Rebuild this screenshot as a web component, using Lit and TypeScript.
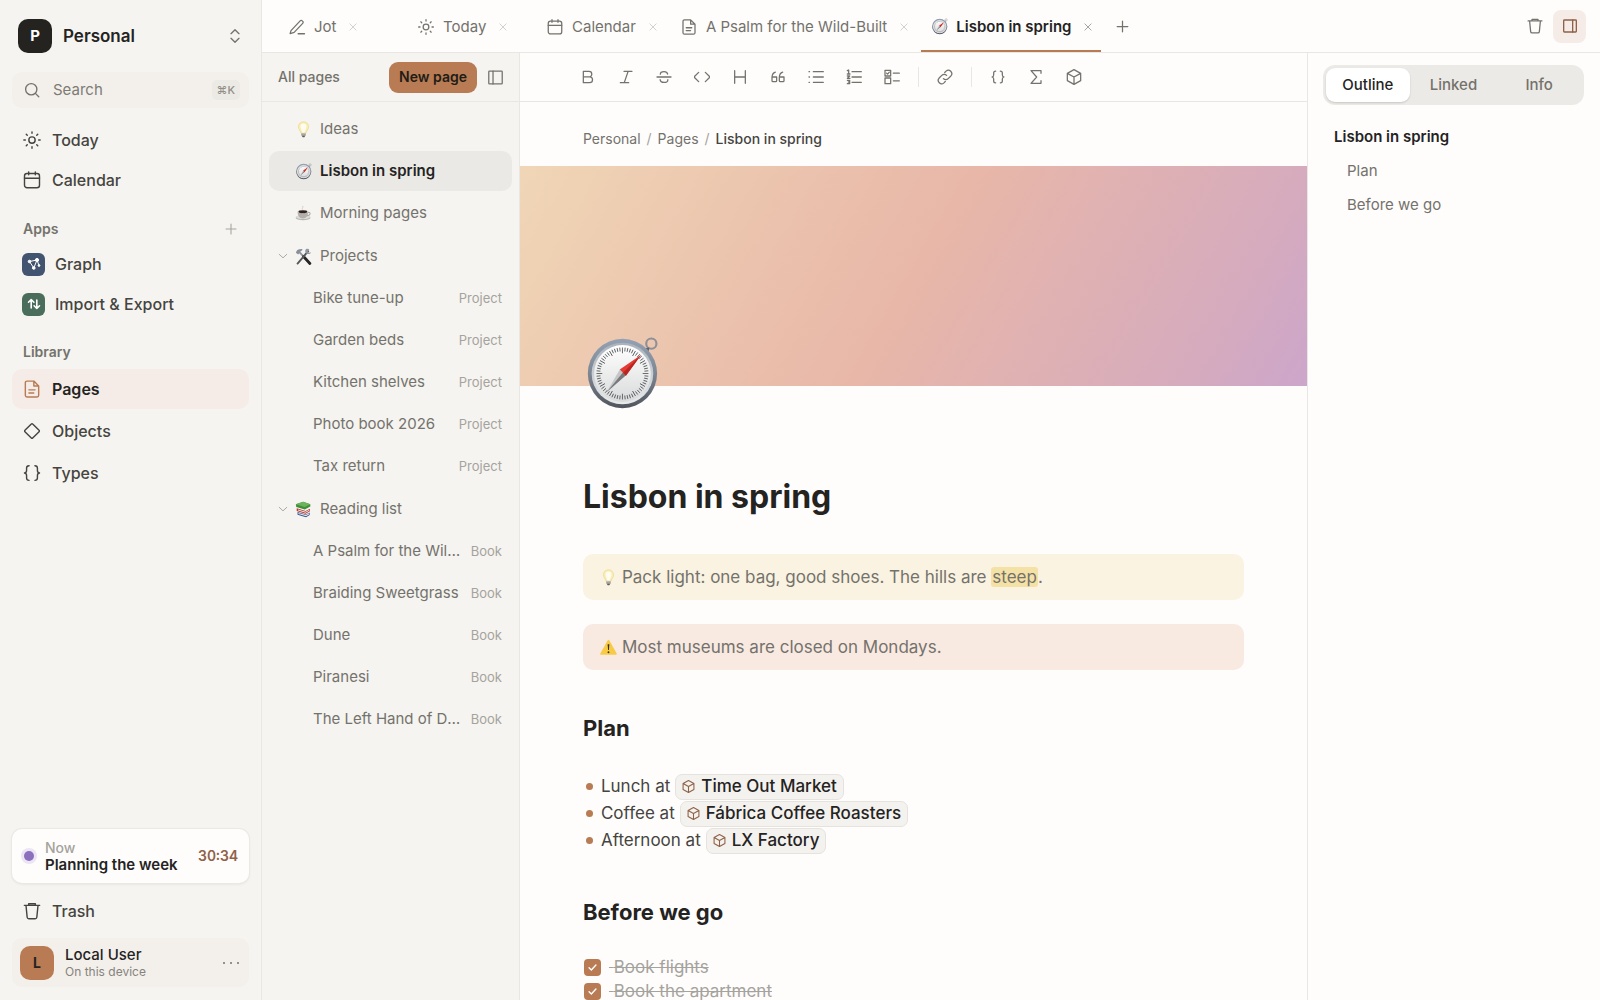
import { LitElement, html, css, svg, nothing, type SVGTemplateResult, type TemplateResult } from "lit";
import { customElement, property, state } from "lit/decorators.js";
import { classMap } from "lit/directives/class-map.js";

/* Line icons, drawn on a 24-unit grid with the current text colour. */
const ICONS: Record<string, SVGTemplateResult> = {
  search: svg`<circle cx="11" cy="11" r="7.5"/><path d="M16.5 16.5 21 21"/>`,
  updown: svg`<path d="M6 8.500l6-6 6 6M6 15.500l6 6 6-6"/>`,
  sun: svg`<circle cx="12" cy="12" r="3.8"/><path d="M12 2.2v1.8M12 20v1.8M2.2 12H4M20 12h1.8M5.1 5.1l1.2 1.2M17.7 17.7l1.2 1.2M5.1 18.9l1.2-1.2M17.7 6.3l1.2-1.2"/>`,
  calendar: svg`<rect x="3" y="4.2" width="18" height="17" rx="3"/><path d="M3 9.8h18M8 2.2v3.6M16 2.2v3.6"/>`,
  doc: svg`<path d="M14.2 2.5H6a2 2 0 0 0-2 2v15a2 2 0 0 0 2 2h12a2 2 0 0 0 2-2V8.300zM14.200 2.500v5.800H20M8.300 13h7.400M8.300 16.700h5.800"/>`,
  diamond: svg`<path d="M11.2 3.500 3.500 11.200a1.100 1.100 0 0 0 0 1.600l7.700 7.700a1.100 1.100 0 0 0 1.600 0l7.700-7.700a1.100 1.100 0 0 0 0-1.600l-7.700-7.700a1.100 1.100 0 0 0-1.600 0z"/>`,
  braces: svg`<path d="M8.500 3.200C5.800 3.200 5.500 4.500 5.500 6v3c0 1.800-.8 2.700-2.500 3 1.700.3 2.500 1.200 2.500 3v3c0 1.500.3 2.800 3 2.800M15.500 3.200c2.700 0 3 1.300 3 2.800v3c0 1.800.8 2.700 2.500 3-1.700.3-2.500 1.200-2.500 3v3c0 1.500-.3 2.800-3 2.800"/>`,
  trash: svg`<path d="M2.800 5.200h18.400M8 5V3.200h8V5M4.800 5.400l1.400 14.100a2 2 0 0 0 2 1.800h7.600a2 2 0 0 0 2-1.800l1.400-14.100"/>`,
  plus: svg`<path d="M12 3.500v17M3.500 12h17"/>`,
  close: svg`<path d="M4.500 4.500l15 15M19.500 4.500l-15 15"/>`,
  chevron: svg`<path d="M3 8l9 8.500L21 8"/>`,
  pen: svg`<path d="M4 16.800 16.200 3.800a2 2 0 0 1 2.900 0l.5.5a2 2 0 0 1 0 2.900L8.200 19.200 2.800 20.800zM13.500 21H22"/>`,
  sidebarLeft: svg`<rect x="2.500" y="3" width="19" height="18" rx="1"/><path d="M8.500 3v18"/>`,
  sidebarRight: svg`<rect x="2.500" y="3" width="19" height="18" rx="1"/><path d="M16 3v18"/>`,
  bold: svg`<path d="M5 3.500h8.500a4.200 4.200 0 0 1 0 8.400H5zM5 11.900h9.500a4.300 4.300 0 0 1 0 8.600H5z"/>`,
  italic: svg`<path d="M9 3.500H21M3.500 20.500H16M15.200 3.500l-5.800 17"/>`,
  strike: svg`<path d="M1.500 12h21M17.500 7.500C17 5.200 15 3.800 12 3.800c-3.300 0-5.500 1.600-5.500 4M6.200 16c.3 2.600 2.500 4.200 5.800 4.200s5.800-1.600 5.800-4.200"/>`,
  code: svg`<path d="M7 5 0 12l7 7M17 5l7 7-7 7"/>`,
  heading: svg`<path d="M4 2.500v19M20 2.500v19M4 12h16"/>`,
  quote: svg`<path d="M10 12H3v5.500a1.500 1.500 0 0 0 1.500 1.500h4a1.500 1.500 0 0 0 1.500-1.500zM3 13c0-4.200.8-7 5-8.300M21 12h-7v5.500a1.500 1.500 0 0 0 1.500 1.500h4a1.500 1.500 0 0 0 1.500-1.500zM14 13c0-4.200.8-7 5-8.300"/>`,
  bullets: svg`<path d="M8 4h15M8 12h15M8 20h15M1.500 4h.8M1.500 12h.8M1.500 20h.8"/>`,
  numbers: svg`<path d="M9 4h14M9 12h14M9 20h14M2 2.500 4 1.500V7.500M2 7.500h4M2 10.500h3.500L2 14h4M2 17h3.500v5H2M3.500 19.500h2"/>`,
  checks: svg`<path d="M1.500 2h8.500v8.500H1.500zM1.500 13.500h8.500V22H1.500zM3.800 6.200l1.600 1.500L8 4.800M14 6.200h9M14 17.700h9"/>`,
  link: svg`<path d="M9.600 14.400a5 5 0 0 0 7.200 0l4-4a5.100 5.100 0 0 0-7.200-7.200l-2 2M14.400 9.600a5 5 0 0 0-7.200 0l-4 4a5.100 5.100 0 0 0 7.200 7.200l2-2"/>`,
  sigma: svg`<path d="M19.500 6.500V2.500H4.500L13 12l-8.500 9.500h15v-4"/>`,
  cube: svg`<path d="M12 1 22 6.500v11L12 23 2 17.500v-11zM2 6.500 12 12l10-5.500M12 12v11"/>`,
  tick: svg`<path d="M4.500 12.500l5 5 10-11"/>`,
};

const icon = (name: string, size = 20, weight = 1.7) => html`<svg
  class="icon" width=${size} height=${size} viewBox="0 0 24 24" fill="none" stroke="currentColor"
  stroke-width=${weight} stroke-linecap="round" stroke-linejoin="round" aria-hidden="true"
>${ICONS[name]}</svg>`;

/* Pictograms in colour, drawn on an 80-unit grid. */
const dialTicks = Array.from({ length: 60 }, (_, i) => i * 6);

const PICTURES: Record<string, SVGTemplateResult> = {
  compass: svg`
    <defs>
      <linearGradient id="rim" x1="0" y1="0" x2="0" y2="1"><stop offset="0" stop-color="#93a1b3"/><stop offset=".5" stop-color="#7d8793"/><stop offset="1" stop-color="#50545d"/></linearGradient>
      <linearGradient id="bezel" x1="0" y1="0" x2="0" y2="1"><stop offset="0" stop-color="#a9b2bb"/><stop offset="1" stop-color="#e9eaea"/></linearGradient>
      <linearGradient id="dial" x1="0" y1="0" x2="0" y2="1"><stop offset="0" stop-color="#ffffff"/><stop offset="1" stop-color="#d9dadb"/></linearGradient>
    </defs>
    <circle cx="71" cy="9" r="5.300" fill="none" stroke="#8d9097" stroke-width="2.200"/>
    <path d="M63 14l5 4 1-5z" fill="#5e6269"/>
    <circle cx="41" cy="40" r="36" fill="url(#rim)"/>
    <circle cx="41" cy="40" r="32" fill="url(#bezel)"/>
    <circle cx="41" cy="40" r="29.500" fill="url(#dial)"/>
    ${dialTicks.map((a) => svg`<path d="M41 ${a % 30 === 0 ? 19 : 17}V13" stroke="#55575a" stroke-width=".9" transform="rotate(${a} 41 40)"/>`)}
    <path d="M24.500 59.500 38.200 35.800l6.400 6z" fill="#c4c6c8"/>
    <path d="M24.500 59.500 41.500 39l3.100 2.800z" fill="#77797c"/>
    <path d="M60.500 20.500 38.200 35.800l6.400 6.500z" fill="#e23b33"/>
    <path d="M60.500 20.500 41.500 39.200l3.100 3.100z" fill="#b92622"/>`,
  bulb: svg`
    <path d="M40 4c-15 0-24 10-24 23 0 12 9 18 12 30h24c3-12 12-18 12-30C64 14 55 4 40 4z" fill="#faedb4" stroke="#ecd58a" stroke-width="3"/>
    <path d="M40 12c-9 0-14 6-14 14 0 9 6 16 9 28h10c3-12 9-19 9-28 0-8-5-14-14-14z" fill="#fffdf2"/>
    <path d="M29 58h22v10H29z" fill="#a5a6a4"/><path d="M31 68h18l-5 9h-8z" fill="#5c5d5c"/>`,
  coffee: svg`
    <path d="M36 4c6 6-6 10 0 18" fill="none" stroke="#c9c6c2" stroke-width="4"/>
    <ellipse cx="38" cy="60" rx="35" ry="12" fill="#b9b6b2"/>
    <ellipse cx="38" cy="57" rx="33" ry="9" fill="#deddda"/>
    <path d="M12 31h50c0 18-8 33-25 33S12 49 12 31z" fill="#b2afac"/>
    <path d="M61 35c14-3 14 14-4 15" fill="none" stroke="#aaa7a3" stroke-width="5"/>
    <ellipse cx="37" cy="31" rx="25" ry="9" fill="#efeeec"/><ellipse cx="37" cy="32" rx="21" ry="7" fill="#33231c"/>`,
  tools: svg`
    <path d="M12 10 68 70" stroke="#8e959b" stroke-width="9"/>
    <path d="M40 40 70 73" stroke="#262626" stroke-width="13" stroke-linecap="round"/>
    <path d="M62 15 12 73" stroke="#55595d" stroke-width="9" stroke-linecap="round"/>
    <path d="M54 4c-8 5-8 17 0 22 7 5 17 3 22-5l-11 1-5-7 7-10z" fill="#8f979f"/>
    <path d="M4 22C8 9 19 3 35 5l-2 8c-5 0-7 2-8 6L15 31z" fill="#88919a"/>`,
  books: svg`
    <path d="M12 52l40 12 17-10v12L52 77 12 65z" fill="#39508f"/><path d="M16 56l36 10 14-8v5L52 72 16 61z" fill="#e9e6df"/>
    <path d="M8 34l42 13 20-11v12L50 60 8 47z" fill="#b53a33"/><path d="M14 40l36 10 17-9v5L50 55 14 45z" fill="#eee9e1"/>
    <path d="M4 15 38 3l34 12v11L46 40 6 28z" fill="#3f8f3c"/><path d="M4 15 38 3l34 12-26 13z" fill="#6bb45b"/>`,
  warning: svg`
    <path d="M40 8 75 70H5z" fill="#f7cb45" stroke="#f7cb45" stroke-width="8" stroke-linejoin="round"/>
    <path d="M36 25h8l-2 27h-4z" fill="#37301c"/><circle cx="40" cy="62" r="4.500" fill="#37301c"/>`,
};

@customElement("picture-glyph")
class PictureGlyph extends LitElement {
  @property() name = "compass";
  @property({ type: Number }) size = 18;
  static styles = css`
    :host { display: inline-flex; flex: none; }
    .art { display: block; }
  `;
  render() {
    return html`<svg class="art" width=${this.size} height=${this.size} viewBox="0 0 80 80" aria-hidden="true">${PICTURES[this.name]}</svg>`;
  }
}

interface Tab { title: string; icon?: string; picture?: string }
interface Page { title: string; kind?: string; picture?: string; children?: Page[] }

const TABS: Tab[] = [
  { title: "Jot", icon: "pen" },
  { title: "Today", icon: "sun" },
  { title: "Calendar", icon: "calendar" },
  { title: "A Psalm for the Wild-Built", icon: "doc" },
  { title: "Lisbon in spring", picture: "compass" },
];

const books = ["A Psalm for the Wild-Built", "Braiding Sweetgrass", "Dune", "Piranesi", "The Left Hand of Darkness"];
const projects = ["Bike tune-up", "Garden beds", "Kitchen shelves", "Photo book 2026", "Tax return"];

const PAGES: Page[] = [
  { title: "Ideas", picture: "bulb" },
  { title: "Lisbon in spring", picture: "compass" },
  { title: "Morning pages", picture: "coffee" },
  { title: "Projects", picture: "tools", children: projects.map((title) => ({ title, kind: "Project" })) },
  { title: "Reading list", picture: "books", children: books.map((title) => ({ title, kind: "Book" })) },
];

const TOOLS: [string, string][][] = [
  [["bold", "Bold"], ["italic", "Italic"], ["strike", "Strikethrough"], ["code", "Code"], ["heading", "Heading"], ["quote", "Quote"], ["bullets", "Bulleted list"], ["numbers", "Numbered list"], ["checks", "Task list"]],
  [["link", "Link"]],
  [["braces", "Code block"], ["sigma", "Formula"], ["cube", "Object"]],
];

const PLAN: [string, string][] = [
  ["Lunch at", "Time Out Market"],
  ["Coffee at", "Fábrica Coffee Roasters"],
  ["Afternoon at", "LX Factory"],
];

@customElement("app-root")
class AppRoot extends LitElement {
  @state() private activeTab = 4;
  @state() private panel = "Outline";
  @state() private selected = "Lisbon in spring";

  static styles = css`
    :host {
      --ink: #24231f;
      --ink-2: #45443f;
      --ink-3: #74726c;
      --ink-4: #a5a39d;
      --line: #e9e7e3;
      --paper: #fefdfc;
      --side: #f5f4f0;
      --accent: #b87b53;
      --accent-deep: #8f6247;
      --tint: #f5ece7;
      display: grid;
      grid-template-columns: 262px minmax(0, 1fr);
      grid-template-rows: minmax(0, 1fr);
      height: 100vh;
      overflow: hidden;
      background: var(--paper);
      color: var(--ink);
      font-family: Inter, "Liberation Sans", sans-serif;
      font-size: 16px;
      line-height: 20px;
    }
    * { box-sizing: border-box; }
    button, input { font: inherit; color: inherit; }
    button { border: 0; margin: 0; padding: 0; background: none; text-align: left; cursor: pointer; }
    a { color: inherit; text-decoration: none; }
    ul { list-style: none; margin: 0; padding: 0; }
    h1, h2, p { margin: 0; }
    .icon { display: block; flex: none; }

    /* Sidebar */
    .sidebar {
      display: flex; flex-direction: column;
      padding: 19px 12px 13px;
      background: var(--side);
      border-right: 1px solid var(--line);
    }
    .workspace { display: flex; align-items: center; gap: 11px; width: 100%; padding: 0 6px; font-size: 17px; font-weight: 600; }
    .workspace .icon { margin-left: auto; color: var(--ink-3); }
    .badge {
      display: grid; place-items: center; flex: none;
      width: 34px; height: 34px; border-radius: 10px;
      background: #24231f; color: #fff; font-size: 15px; font-weight: 700;
    }
    .badge.user { background: var(--accent); color: var(--ink); font-size: 14px; }
    .search {
      display: flex; align-items: center; gap: 12px;
      height: 36px; margin: 19px 0 12px; padding: 0 9px 0 11px;
      border-radius: 10px; background: #f3f0eb; color: var(--ink-3); font-size: 15px;
    }
    .search input { flex: 1; min-width: 0; border: 0; padding: 0; background: none; outline: none; }
    .search input::placeholder { color: #7d7b75; opacity: 1; }
    kbd { padding: 0 5px; border-radius: 5px; background: #eceae5; color: #908e87; font-family: inherit; font-size: 11px; font-weight: 500; }
    .nav { display: flex; flex-direction: column; }
    .nav.spaced { gap: 2px; }
    .nav a, .trash { display: flex; align-items: center; gap: 10px; height: 40px; padding: 0 10px; border-radius: 10px; color: var(--ink-2); font-weight: 500; }
    .nav a.current { background: var(--tint); color: var(--ink); font-weight: 600; }
    .nav a.current .icon { color: var(--accent); }
    .section { display: flex; align-items: center; justify-content: space-between; height: 20px; padding: 0 11px; color: var(--ink-3); font-size: 14px; font-weight: 600; }
    .section button { color: var(--ink-4); }
    .section.apps { margin: 19px 0 5px; }
    .section.library { margin: 18px 0 7px; }
    .app { display: grid; place-items: center; width: 23px; height: 23px; border-radius: 6px; color: #fff; }
    .app.graph { background: #42546f; }
    .app.transfer { background: #4a6e5b; }
    .foot { display: flex; flex-direction: column; margin-top: auto; }
    .now {
      display: flex; align-items: center; gap: 10px;
      height: 54px; padding: 0 11px;
      border-radius: 10px; background: var(--paper);
      box-shadow: 0 0 0 1px #ebe9e4, 0 1px 3px #0000001a;
    }
    .pulse { width: 10px; height: 10px; margin: 0 1px; border-radius: 50%; background: #8b70bd; box-shadow: 0 0 0 3px #ebe5f4; }
    .now-text, .user-text { display: flex; flex-direction: column; }
    .now-text { font-size: 15px; line-height: 17px; font-weight: 600; }
    .now-label { color: var(--ink-4); font-size: 14px; font-weight: 500; }
    .timer { margin-left: auto; color: var(--accent-deep); font-size: 14px; font-weight: 600; font-variant-numeric: tabular-nums; }
    .trash { width: 100%; margin: 8px 0 7px; }
    .account { display: flex; align-items: center; gap: 11px; height: 49px; padding: 0 8px; border-radius: 10px; background: #f3f0eb; }
    .user-text { font-size: 15px; line-height: 18px; font-weight: 500; }
    .device { color: #85837d; font-size: 12px; line-height: 16px; font-weight: 400; }
    .more { display: flex; gap: 5px; margin-left: auto; padding: 8px 2px; }
    .more i { width: 2px; height: 2px; border-radius: 50%; background: var(--ink-3); }

    /* Tab bar */
    .main { display: grid; grid-template-rows: 53px minmax(0, 1fr); min-width: 0; }
    .tabs { display: flex; align-items: stretch; gap: 4px; padding: 0 14px 0 16px; border-bottom: 1px solid var(--line); }
    .tab { display: flex; align-items: center; gap: 11px; min-width: 125px; padding: 3px 7px 0 9px; border-bottom: 2px solid transparent; color: var(--ink-3); font-size: 15px; }
    .tab-label { display: flex; align-items: center; gap: 8px; padding-left: 1px; white-space: nowrap; }
    .tab .close { padding: 1px; color: #cfcdc8; }
    .tab.current { border-color: var(--accent); color: var(--ink); font-weight: 600; }
    .tab.current .close { color: #9d9b95; }
    .add { padding: 0 10px; color: var(--ink-3); }
    .actions { display: flex; align-items: center; gap: 2px; margin-left: auto; color: var(--ink-3); }
    .square { display: grid; place-items: center; width: 33px; height: 33px; border-radius: 8px; }
    .square.on { background: var(--tint); color: var(--accent-deep); }

    .columns { display: grid; grid-template-columns: 258px minmax(0, 1fr) 293px; min-height: 0; }

    /* Page list */
    .pages { display: flex; flex-direction: column; min-height: 0; background: var(--side); border-right: 1px solid var(--line); }
    .pages-head { display: flex; align-items: center; height: 49px; padding: 0 15px 0 16px; border-bottom: 1px solid var(--line); color: var(--ink-3); font-size: 14px; font-weight: 500; }
    .new { height: 31px; margin-left: auto; padding: 0 10px; border-radius: 9px; background: var(--accent); color: #211c17; font-weight: 600; }
    .collapse { margin-left: 10px; }
    .tree, .branch { display: flex; flex-direction: column; gap: 2px; }
    .tree { padding: 7px 7px 0; }
    .branch.open { margin-top: 1px; }
    .row { display: flex; align-items: center; width: 100%; height: 40px; padding: 0 10px 0 7px; border-radius: 10px; color: var(--ink-3); font-size: 15px; }
    .row .twist { display: grid; place-items: center; width: 14px; margin-right: 5px; color: var(--ink-4); }
    .row picture-glyph { margin-right: 8px; }
    .row.child { padding-left: 44px; gap: 10px; }
    .row .name { overflow: hidden; white-space: nowrap; text-overflow: ellipsis; }
    .row .kind { margin-left: auto; color: var(--ink-4); font-size: 13px; }
    .row.current { background: #ebe9e5; color: var(--ink); font-weight: 600; }

    /* Editor */
    .editor { display: flex; flex-direction: column; min-height: 0; overflow: hidden; }
    .toolbar { display: flex; align-items: center; flex: none; gap: 4px; height: 49px; padding: 0 51px; border-bottom: 1px solid var(--line); color: var(--ink-3); }
    .toolbar button { display: grid; place-items: center; width: 34px; height: 34px; }
    .divider { width: 1px; height: 20px; margin: 0 5px; background: var(--line); }
    .crumbs { display: flex; align-items: center; flex: none; gap: 6px; height: 64px; padding: 9px 8% 0; color: var(--ink-3); font-size: 14px; }
    .crumbs .slash { color: var(--ink-4); }
    .crumbs .here { color: var(--ink-2); font-weight: 500; }
    .cover {
      flex: none; height: 220px;
      background: linear-gradient(120deg, #f0d6b6 0%, #e8b7a8 50%, #d6abbd 86%, #cca6cb 100%);
    }
    .body { padding: 0 8%; }
    .page-icon { display: flex; margin: -51px 0 63px; }
    h1 { font-size: 32px; line-height: 44px; font-weight: 700; }
    h2 { margin-top: 43px; font-size: 22px; line-height: 30px; font-weight: 700; }
    .callouts { display: flex; flex-direction: column; gap: 24px; margin-top: 35px; font-size: 17px; line-height: 26px; color: var(--ink-3); }
    .callout { display: flex; align-items: center; gap: 5px; padding: 10px 17px; border-radius: 10px; background: #faf3e1; }
    .callout.warn { background: #f8e9e1; }
    mark { padding: 0 1px; border-radius: 3px; background: #f4e1a6; color: inherit; }
    .plan { margin-top: 30px; font-size: 17px; line-height: 27px; color: var(--ink-2); }
    .plan li { display: flex; align-items: center; height: 27px; }
    .plan li::before { content: ""; width: 7px; height: 7px; margin: 0 8px 0 3px; border-radius: 50%; background: var(--accent); }
    .chip { display: flex; align-items: center; gap: 6px; height: 26px; margin-left: 5px; padding: 0 6px; border: 1px solid #e6e3de; border-radius: 7px; background: #f4f2ee; color: var(--ink); font-weight: 500; }
    .chip .icon { color: var(--accent-deep); }
    .tasks { margin-top: 28px; font-size: 17px; line-height: 24px; }
    .task { display: flex; align-items: center; height: 24px; color: var(--ink-4); }
    .box { display: grid; place-items: center; margin-right: 7px; color: #fff; }
    .box input { grid-area: 1 / 1; appearance: none; width: 17px; height: 17px; margin: 0 1px; border-radius: 4px; background: var(--accent); }
    .box .icon { grid-area: 1 / 1; pointer-events: none; }
    .done { text-decoration: line-through; white-space: pre; }

    /* Inspector */
    .inspector { padding: 12px 16px 0 15px; border-left: 1px solid var(--line); }
    .segments { display: grid; grid-template-columns: repeat(3, 1fr); gap: 2px; padding: 3px; border-radius: 12px; background: #eceae6; }
    .segments button { height: 34px; border-radius: 9px; color: var(--ink-3); font-size: 15px; text-align: center; font-weight: 500; }
    .segments button.current { background: #fff; color: var(--ink); box-shadow: 0 1px 2px #00000026; }
    .outline { display: flex; flex-direction: column; margin-top: 15px; padding-left: 11px; color: var(--ink-3); font-size: 15px; }
    .outline a { height: 34px; padding: 7px 0 7px 13px; }
    .outline a.top { padding-left: 0; color: var(--ink); font-weight: 600; }
  `;

  private navLink(name: string, label: string, current = false) {
    return html`<a href="#" class=${classMap({ current })}>${icon(name)}${label}</a>`;
  }

  private sidebar() {
    return html`<aside class="sidebar">
      <button class="workspace"><span class="badge">P</span>Personal${icon("updown", 16, 2)}</button>
      <label class="search">${icon("search", 18, 1.8)}<input type="text" placeholder="Search" aria-label="Search" /><kbd>⌘K</kbd></label>
      <nav class="nav">${this.navLink("sun", "Today")}${this.navLink("calendar", "Calendar")}</nav>
      <div class="section apps">Apps<button aria-label="Add app">${icon("plus", 14, 1.8)}</button></div>
      <nav class="nav">
        <a href="#"><span class="app graph"><svg class="icon" width="16" height="16" viewBox="0 0 16 16" fill="#fff" stroke="#fff" aria-hidden="true">
          <path d="M3.500 5.500 11 4 13 9.500M3.500 5.500 7.800 12 11 4" fill="none" stroke-width="1"/>
          <circle cx="3.500" cy="5.500" r="1.300"/><circle cx="11" cy="4" r="1.600"/><circle cx="13" cy="9.500" r=".9"/><circle cx="7.800" cy="12" r="1.300"/></svg></span>Graph</a>
        <a href="#"><span class="app transfer"><svg class="icon" width="16" height="16" viewBox="0 0 16 16" fill="none" stroke="#fff" stroke-width="1.600" stroke-linecap="round" stroke-linejoin="round" aria-hidden="true">
          <path d="M5.200 12V3.500M2.500 6.200l2.700-2.700 2.700 2.700M10.800 4v8.500M8.100 9.800l2.700 2.700 2.700-2.700"/></svg></span>Import &amp; Export</a>
      </nav>
      <div class="section library">Library</div>
      <nav class="nav spaced">${this.navLink("doc", "Pages", true)}${this.navLink("diamond", "Objects")}${this.navLink("braces", "Types")}</nav>
      <div class="foot">
        <div class="now">
          <span class="pulse"></span>
          <div class="now-text"><span class="now-label">Now</span>Planning the week</div>
          <span class="timer">30:34</span>
        </div>
        <button class="trash">${icon("trash")}Trash</button>
        <div class="account">
          <span class="badge user">L</span>
          <div class="user-text">Local User<span class="device">On this device</span></div>
          <button class="more" aria-label="Account menu"><i></i><i></i><i></i></button>
        </div>
      </div>
    </aside>`;
  }

  private tabBar() {
    return html`<header class="tabs">
      ${TABS.map((tab, i) => html`<div class=${classMap({ tab: true, current: i === this.activeTab })}>
        <button class="tab-label" @click=${() => (this.activeTab = i)}>
          ${tab.picture ? html`<picture-glyph name=${tab.picture} size="17"></picture-glyph>` : icon(tab.icon!, 18)}${tab.title}
        </button>
        <button class="close" aria-label="Close ${tab.title}">${icon("close", 10, 2.2)}</button>
      </div>`)}
      <button class="add" aria-label="New tab">${icon("plus", 15, 2)}</button>
      <div class="actions">
        <button class="square" aria-label="Move to trash">${icon("trash", 18)}</button>
        <button class="square on" aria-label="Toggle side panel">${icon("sidebarRight", 16, 2)}</button>
      </div>
    </header>`;
  }

  private row(page: Page): TemplateResult {
    const current = page.title === this.selected;
    return html`<div class=${classMap({ branch: true, open: !!page.children })}>
      <button class=${classMap({ row: true, current, child: !!page.kind })} @click=${() => (this.selected = page.title)}>
        ${page.kind ? nothing : html`<span class="twist">${page.children ? icon("chevron", 10, 2.2) : nothing}</span><picture-glyph name=${page.picture!} size="17"></picture-glyph>`}
        <span class="name">${page.title}</span>
        ${page.kind ? html`<span class="kind">${page.kind}</span>` : nothing}
      </button>
      ${page.children?.map((child) => this.row(child))}
    </div>`;
  }

  private pageList() {
    return html`<section class="pages">
      <div class="pages-head">All pages<button class="new">New page</button><button class="collapse" aria-label="Hide list">${icon("sidebarLeft", 17, 1.8)}</button></div>
      <div class="tree">${PAGES.map((page) => this.row(page))}</div>
    </section>`;
  }

  private task(id: string, text: string) {
    return html`<li class="task"><span class="box"><input type="checkbox" id=${id} checked />${icon("tick", 11, 3)}</span><label class="done" for=${id}> ${text}</label></li>`;
  }

  private editor() {
    return html`<main class="editor">
      <div class="toolbar">
        ${TOOLS.map((group, i) => html`${i ? html`<span class="divider"></span>` : nothing}${group.map(([name, label]) => html`<button aria-label=${label}>${icon(name, 16, 1.9)}</button>`)}`)}
      </div>
      <nav class="crumbs"><a href="#">Personal</a><span class="slash">/</span><a href="#">Pages</a><span class="slash">/</span><span class="here">Lisbon in spring</span></nav>
      <div class="cover"></div>
      <article class="body">
        <div class="page-icon"><picture-glyph name="compass" size="77"></picture-glyph></div>
        <h1>Lisbon in spring</h1>
        <div class="callouts">
          <div class="callout"><picture-glyph name="bulb" size="17"></picture-glyph><p>Pack light: one bag, good shoes. The hills are <mark>steep</mark>.</p></div>
          <div class="callout warn"><picture-glyph name="warning" size="17"></picture-glyph><p>Most museums are closed on Mondays.</p></div>
        </div>
        <h2>Plan</h2>
        <ul class="plan">${PLAN.map(([lead, place]) => html`<li>${lead}<a class="chip" href="#">${icon("cube", 13, 2)}${place}</a></li>`)}</ul>
        <h2>Before we go</h2>
        <ul class="tasks">${this.task("flights", "Book flights")}${this.task("apartment", "Book the apartment")}</ul>
      </article>
    </main>`;
  }

  private inspector() {
    return html`<aside class="inspector">
      <div class="segments">
        ${["Outline", "Linked", "Info"].map((name) => html`<button class=${classMap({ current: name === this.panel })} @click=${() => (this.panel = name)}>${name}</button>`)}
      </div>
      <nav class="outline"><a class="top" href="#">Lisbon in spring</a><a href="#">Plan</a><a href="#">Before we go</a></nav>
    </aside>`;
  }

  render() {
    return html`${this.sidebar()}
      <div class="main">${this.tabBar()}<div class="columns">${this.pageList()}${this.editor()}${this.inspector()}</div></div>`;
  }
}
